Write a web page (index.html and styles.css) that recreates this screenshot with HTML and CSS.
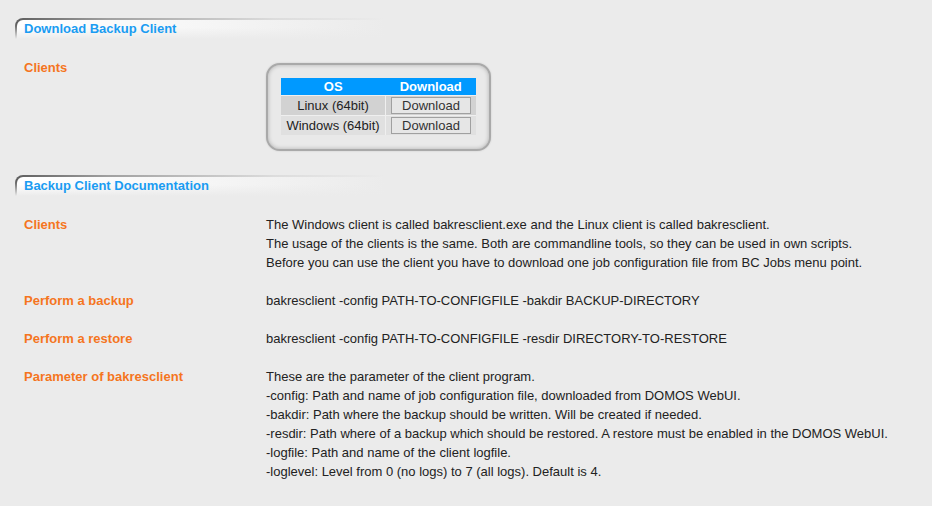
FILE: index.html
```html
<!DOCTYPE html>
<html lang="en">
<head>
    <meta charset="UTF-8">
    <title>Backup Client</title>
    <link rel="stylesheet" href="styles.css">
</head>
<body>
    <div class="section">
        <div class="sect-head"><div class="sect-inner">Download Backup Client</div></div>
        <div class="rows">
            <div class="row">
                <div class="label">Clients</div>
                <div class="value">
                    <div class="dl-box">
                        <table class="dl-table">
                            <tr><th>OS</th><th>Download</th></tr>
                            <tr class="odd"><td>Linux (64bit)</td><td><button>Download</button></td></tr>
                            <tr class="even"><td>Windows (64bit)</td><td><button>Download</button></td></tr>
                        </table>
                    </div>
                </div>
            </div>
        </div>
    </div>
    <div class="section">
        <div class="sect-head"><div class="sect-inner">Backup Client Documentation</div></div>
        <div class="rows">
            <div class="row">
                <div class="label">Clients</div>
                <div class="value">
                    The Windows client is called bakresclient.exe and the Linux client is called bakresclient.<br>
                    The usage of the clients is the same. Both are commandline tools, so they can be used in own scripts.<br>
                    Before you can use the client you have to download one job configuration file from BC Jobs menu point.
                </div>
            </div>
            <div class="row">
                <div class="label">Perform a backup</div>
                <div class="value">bakresclient -config PATH-TO-CONFIGFILE -bakdir BACKUP-DIRECTORY</div>
            </div>
            <div class="row">
                <div class="label">Perform a restore</div>
                <div class="value">bakresclient -config PATH-TO-CONFIGFILE -resdir DIRECTORY-TO-RESTORE</div>
            </div>
            <div class="row">
                <div class="label">Parameter of bakresclient</div>
                <div class="value">
                    These are the parameter of the client program.<br>
                    -config: Path and name of job configuration file, downloaded from DOMOS WebUI.<br>
                    -bakdir: Path where the backup should be written. Will be created if needed.<br>
                    -resdir: Path where of a backup which should be restored. A restore must be enabled in the DOMOS WebUI.<br>
                    -logfile: Path and name of the client logfile.<br>
                    -loglevel: Level from 0 (no logs) to 7 (all logs). Default is 4.
                </div>
            </div>
        </div>
    </div>
</body>
</html>
```

FILE: styles.css
```css
body {
    margin: 0;
    padding-top: 18px;
    background: #ebebeb;
    font-family: "Liberation Sans", Arial, sans-serif;
    font-size: 13px;
    color: #222;
}
.section {
    margin-bottom: 15px;
}
.sect-head {
    margin-left: 15px;
    width: 370px;
    height: 21px;
    padding: 2px 0 0 2px;
    box-sizing: border-box;
    border-top-left-radius: 8px;
    background:
        linear-gradient(to bottom, rgba(235, 235, 235, 0) 30%, #ebebeb 100%),
        linear-gradient(to right, #5e5e5e, #a0a0a0 25%, #dcdcdc 70%, #ebebeb 100%);
}
.sect-inner {
    height: 19px;
    line-height: 18px;
    padding-left: 7px;
    border-top-left-radius: 6px;
    background:
        linear-gradient(to bottom, rgba(235, 235, 235, 0) 40%, #ebebeb 100%),
        linear-gradient(to right, #ffffff, #f6f6f6 50%, #ebebeb 100%);
    color: #1a9cf2;
    font-weight: bold;
}
.rows {
    padding-top: 9px;
}
.row {
    display: flex;
    padding: 10px 0 9px 0;
    line-height: 19px;
}
.label {
    width: 242px;
    padding-left: 24px;
    color: #f5751e;
    font-weight: bold;
}
.dl-box {
    width: 195px;
    margin-top: 5px;
    padding: 13px 13px 14px 13px;
    border: 2px solid #a9a9a9;
    border-radius: 14px;
    box-shadow: inset 0 0 4px rgba(0, 0, 0, 0.25), 0 0 2px rgba(0, 0, 0, 0.15);
    background: #e9e9e9;
}
.dl-table {
    width: 195px;
    border-collapse: collapse;
    line-height: 15px;
}
.dl-table th {
    height: 17px;
    padding: 0;
    background: #0099ff;
    color: #fff;
    font-weight: bold;
}
.dl-table td {
    height: 19px;
    padding: 0 3px;
    text-align: center;
    border-top: 1px solid #efefef;
    border-left: 1px solid #efefef;
}
.dl-table td:first-child {
    border-left: none;
    width: 98px;
}
.odd td {
    background: #d2d2d2;
}
.even td {
    background: #e0e0e0;
}
.dl-table button {
    width: 80px;
    height: 17px;
    padding: 0;
    font-family: inherit;
    font-size: 13px;
    color: #333;
    background: #e6e6e6;
    border: 1px solid #a0a0a0;
}
```
